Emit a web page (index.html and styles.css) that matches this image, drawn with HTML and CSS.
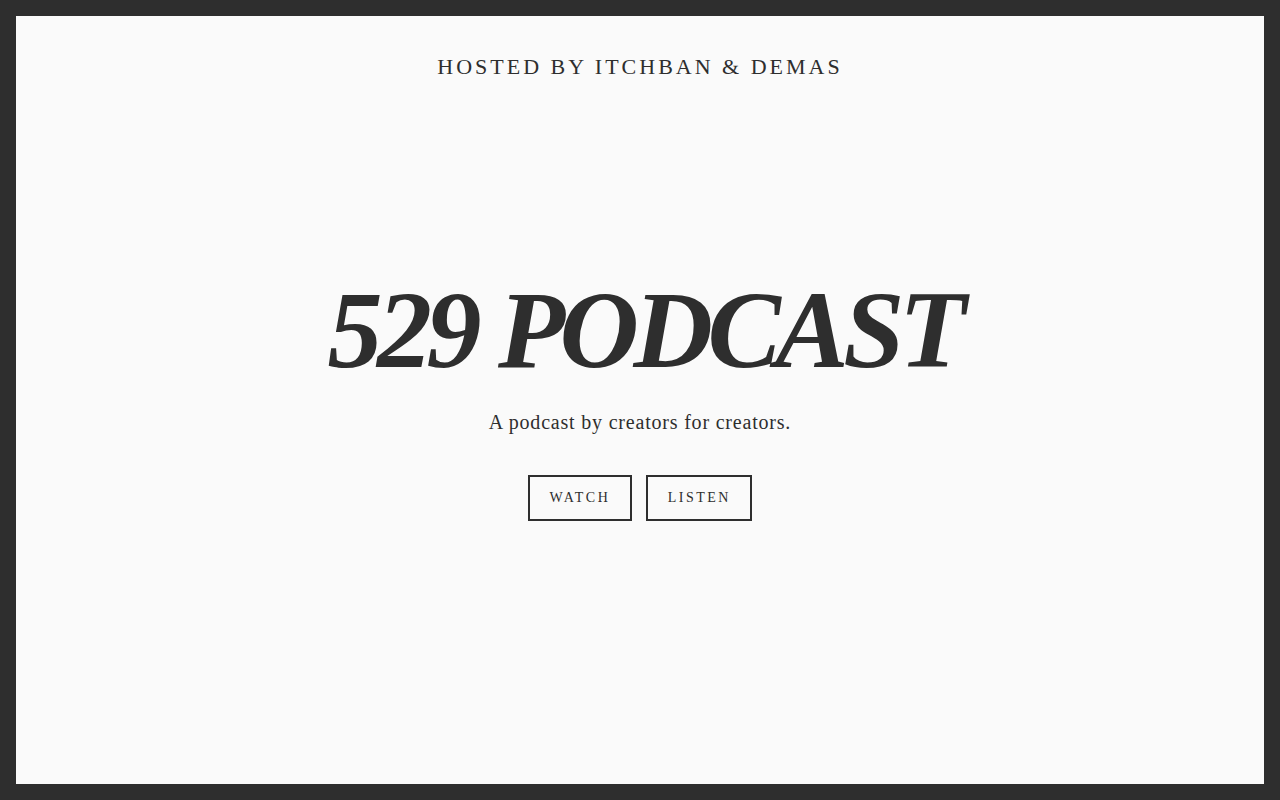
FILE: index.html
```html
<!DOCTYPE html>
<html>
<head>
<meta charset="utf-8">
<link rel="stylesheet" href="styles.css">
</head>
<body>
<div class="frame">
  <header class="top">HOSTED BY ITCHBAN &amp; DEMAS</header>
  <main class="hero">
    <h1 class="title">529 PODCAST</h1>
    <p class="tagline">A podcast by creators for creators.</p>
    <div class="actions">
      <a class="btn" href="#">WATCH</a>
      <a class="btn" href="#">LISTEN</a>
    </div>
  </main>
</div>
</body>
</html>
```

FILE: styles.css
```css
html, body {
  margin: 0;
  height: 100%;
}
body {
  background: #2e2e2e;
  padding: 16px;
  box-sizing: border-box;
  font-family: "Liberation Serif", "Times New Roman", serif;
  color: #2e2e2e;
}
.frame {
  background: #fafafa;
  height: 100%;
  display: flex;
  flex-direction: column;
  align-items: center;
}
.top {
  margin-top: 38px;
  font-size: 22px;
  letter-spacing: 3px;
  line-height: 26px;
  color: #2e2e2e;
}
.hero {
  flex: 1;
  display: flex;
  flex-direction: column;
  align-items: center;
  justify-content: center;
  padding-bottom: 68px;
}
.title {
  margin: 0;
  padding-left: 8px;
  font-size: 110px;
  font-weight: bold;
  font-style: italic;
  line-height: 110px;
  letter-spacing: -5.5px;
}
.tagline {
  margin: 25px 0 0;
  font-size: 20px;
  line-height: 24px;
  letter-spacing: 0.8px;
}
.actions {
  display: flex;
  gap: 14px;
  margin-top: 41px;
}
.btn {
  display: block;
  border: 2px solid #2e2e2e;
  padding: 13px 19.5px 13px 20px;
  font-size: 14px;
  letter-spacing: 2.5px;
  line-height: 16px;
  color: #2e2e2e;
  text-decoration: none;
}
```
